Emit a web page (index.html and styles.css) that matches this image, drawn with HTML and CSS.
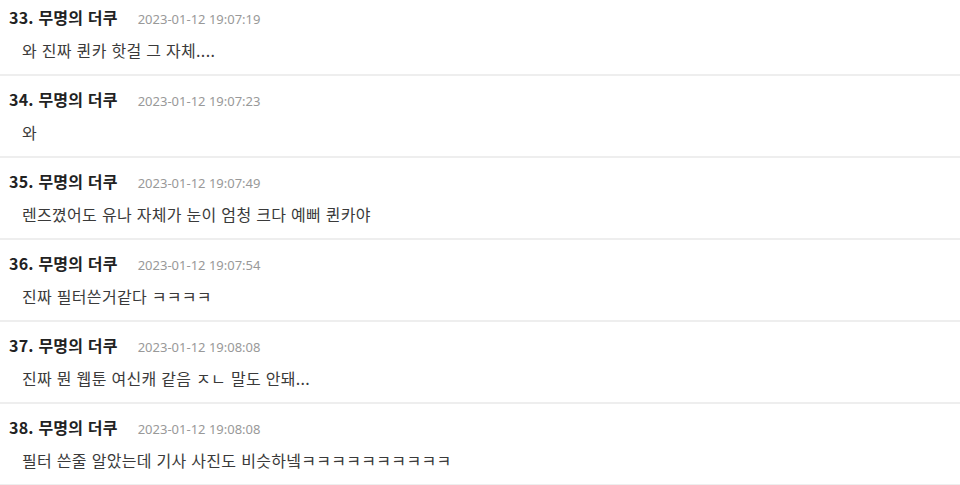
FILE: index.html
```html
<!DOCTYPE html>
<html lang="ko">
<head>
<meta charset="utf-8">
<link rel="stylesheet" href="styles.css">
</head>
<body>
<ul class="comments">
  <li class="comment">
    <div class="meta"><span class="name">33. 무명의 더쿠</span><span class="date">2023-01-12 19:07:19</span></div>
    <p class="text">와 진짜 퀸카 핫걸 그 자체....</p>
  </li>
  <li class="comment">
    <div class="meta"><span class="name">34. 무명의 더쿠</span><span class="date">2023-01-12 19:07:23</span></div>
    <p class="text">와</p>
  </li>
  <li class="comment">
    <div class="meta"><span class="name">35. 무명의 더쿠</span><span class="date">2023-01-12 19:07:49</span></div>
    <p class="text">렌즈꼈어도 유나 자체가 눈이 엄청 크다 예뻐 퀸카야</p>
  </li>
  <li class="comment">
    <div class="meta"><span class="name">36. 무명의 더쿠</span><span class="date">2023-01-12 19:07:54</span></div>
    <p class="text">진짜 필터쓴거같다 ㅋㅋㅋㅋ</p>
  </li>
  <li class="comment">
    <div class="meta"><span class="name">37. 무명의 더쿠</span><span class="date">2023-01-12 19:08:08</span></div>
    <p class="text">진짜 뭔 웹툰 여신캐 같음 ㅈㄴ 말도 안돼...</p>
  </li>
  <li class="comment">
    <div class="meta"><span class="name">38. 무명의 더쿠</span><span class="date">2023-01-12 19:08:08</span></div>
    <p class="text">필터 쓴줄 알았는데 기사 사진도 비슷하넼ㅋㅋㅋㅋㅋㅋㅋㅋㅋㅋ</p>
  </li>
</ul>
</body>
</html>
```
FILE: styles.css
```css
html, body {
  margin: 0;
  padding: 0;
  background: #fff;
}
body {
  font-family: "Noto Sans", "Noto Sans CJK KR", sans-serif;
  color: #333;
  overflow: hidden;
}
.comments {
  list-style: none;
  margin: 0;
  padding: 0;
}
.comment {
  padding: 12px 0 12px 9px;
  border-bottom: 2px solid #eeeeee;
}
.comment:first-child {
  padding-top: 6px;
}
.meta {
  display: flex;
  align-items: baseline;
  gap: 20px;
  height: 22px;
  line-height: 22px;
}
.name {
  font-family: "Noto Sans CJK KR", sans-serif;
  font-weight: 700;
  font-size: 16px;
  letter-spacing: 0.2px;
  color: #222;
}
.date {
  font-size: 13px;
  color: #999;
}
.text {
  margin: 11px 0 0 13px;
  font-family: "Noto Sans CJK KR", sans-serif;
  font-size: 16px;
  letter-spacing: 0.3px;
  line-height: 22px;
  height: 22px;
  color: #3a3a3a;
}
.comment .text {
  padding-bottom: 1px;
}
```
